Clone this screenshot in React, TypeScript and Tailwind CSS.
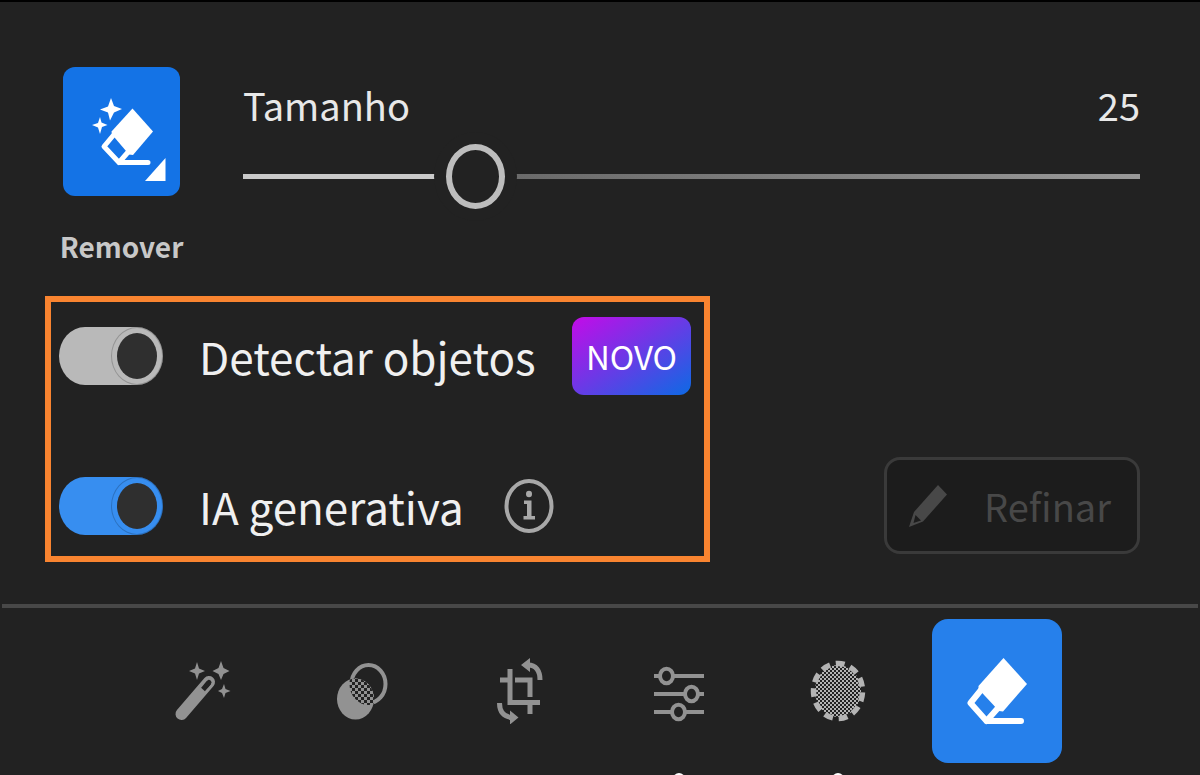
import { useState } from "react";
import type { ReactNode } from "react";

function MagicEraserIcon() {
  return (
    <svg viewBox="0 0 117 129" className="h-full w-full" aria-hidden="true">
      <path
        fill="#fff"
        d="M48 31l3 8 8 3-8 3.500-4 8-2-8-8-3 8-3zM37 50l1.500 5.500 6 2.500-5.500 2-2 7-2-6.500-6-2.500 6-2z"
      />
      <path fill="#fff" d="M69.500 41.500L90 64.500 70 88l-4-.5-17-20-.5-3z" />
      <path
        fill="none"
        stroke="#fff"
        strokeWidth="5"
        strokeLinejoin="round"
        strokeLinecap="round"
        d="M51 67.500L41 79.500 56 95.500 66 84M56 95.500H85"
      />
      <path fill="#fff" d="M102.500 91V114H82z" />
    </svg>
  );
}

function WandIcon() {
  return (
    <svg viewBox="0 0 60 66" className="h-[66px] w-[60px]" aria-hidden="true">
      <path
        fill="none"
        stroke="currentColor"
        strokeWidth="12"
        strokeLinecap="round"
        d="M9.500 56L37 24"
      />
      <path fill="none" stroke="#222" strokeWidth="5" strokeLinecap="round" d="M37 24.500L34.500 27.500" />
      <path stroke="#222" strokeWidth="5" d="M37 24.500L31 31.500" />
      <path
        fill="currentColor"
        d="M25 4l2 6.500 6 2.500-6 2.500-2 6.500-2-6.500-6-2.500 6-2.500zM49 3l2.500 7 6 3-6 3L49 22l-2.500-6-6-3 6-3zM52 26l1.500 5 5 2-5 2-1.500 5-2-5-4-2 4-2z"
      />
    </svg>
  );
}

function PresetsIcon() {
  return (
    <svg viewBox="0 0 60 66" className="h-[66px] w-[60px]" aria-hidden="true">
      <defs>
        <pattern id="presets-check" width="6" height="6" patternUnits="userSpaceOnUse">
          <rect width="6" height="6" fill="#222" />
          <path fill="currentColor" d="M0 0h3v3H0zM3 3h3v3H3z" />
        </pattern>
        <clipPath id="presets-clip">
          <ellipse cx="24.500" cy="41" rx="18.500" ry="20.500" />
        </clipPath>
      </defs>
      <ellipse cx="24.500" cy="41" rx="18.500" ry="20.500" fill="currentColor" />
      <ellipse
        cx="37.500"
        cy="26"
        rx="17"
        ry="19"
        fill="none"
        stroke="currentColor"
        strokeWidth="4"
      />
      <ellipse
        cx="37.500"
        cy="26"
        rx="19"
        ry="21"
        fill="url(#presets-check)"
        clipPath="url(#presets-clip)"
      />
    </svg>
  );
}

function CropIcon() {
  return (
    <svg viewBox="0 0 60 66" className="h-[66px] w-[60px]" aria-hidden="true">
      <path
        fill="none"
        stroke="currentColor"
        strokeWidth="5"
        d="M20 11V44.500H50M10 22H17.500M25 22H40V39M40 47V56"
      />
      <path
        fill="none"
        stroke="currentColor"
        strokeWidth="5"
        d="M38 7C46 7 50 13 50 22M9.500 45C9.500 54 14 59 22 59.500"
      />
      <path fill="currentColor" d="M31 7L40 0V14zM28.500 59.500L20 52.500V66.500z" />
    </svg>
  );
}

function SlidersIcon() {
  return (
    <svg viewBox="0 0 60 66" className="h-[66px] w-[60px]" aria-hidden="true">
      <g fill="none" stroke="currentColor" strokeWidth="4">
        <path d="M5 18h6M24 18h31M5 36h31M49 36h6M5 54h18M36 54h19" />
        <ellipse cx="17.500" cy="18" rx="6.500" ry="7.200" />
        <ellipse cx="42.500" cy="36" rx="6.500" ry="7.200" />
        <ellipse cx="29.500" cy="54" rx="6.500" ry="7.200" />
      </g>
    </svg>
  );
}

function MaskIcon() {
  return (
    <svg viewBox="0 0 60 66" className="h-[66px] w-[60px]" aria-hidden="true">
      <defs>
        <pattern id="mask-check" width="4" height="4" patternUnits="userSpaceOnUse">
          <path fill="#b4b4b4" d="M0 0h2v2H0zM2 2h2v2H2z" />
        </pattern>
      </defs>
      <ellipse cx="30" cy="33" rx="23" ry="26" fill="url(#mask-check)" />
      <ellipse
        cx="30"
        cy="33"
        rx="24.500"
        ry="27.500"
        fill="none"
        stroke="#b4b4b4"
        strokeWidth="5.500"
        pathLength="110"
        strokeDasharray="6 4"
        strokeDashoffset="-1"
      />
    </svg>
  );
}

function EraserIcon() {
  return (
    <svg viewBox="0 0 130 144" className="h-full w-full" aria-hidden="true">
      <path fill="#fff" d="M71.500 39L95 65 71 92.500l-4-.5-20.500-22V67z" />
      <path
        fill="none"
        stroke="#fff"
        strokeWidth="6"
        strokeLinejoin="round"
        strokeLinecap="round"
        d="M49 71L38.500 84 54.500 102 66 89M54.500 102H89"
      />
    </svg>
  );
}

function InfoIcon() {
  return (
    <svg viewBox="0 0 50 54" className="h-[54px] w-[50px]" aria-hidden="true">
      <ellipse cx="25" cy="27" rx="22.500" ry="25" fill="none" stroke="#a8a8a8" strokeWidth="4" />
      <ellipse cx="25" cy="15" rx="3" ry="3.300" fill="#a8a8a8" />
      <path fill="#a8a8a8" d="M20 21.500h7.500v15.500H31v3.500H19.500V37H23V25h-3z" />
    </svg>
  );
}

function PencilIcon() {
  return (
    <svg viewBox="0 0 38 42" className="h-[42px] w-[38px]" aria-hidden="true">
      <path fill="#484848" d="M29 0L38 9.500 14 36.500 0 42 5 27z" />
      <path fill="#1c1c1c" d="M6.500 30L12 35.500 4.500 38z" />
    </svg>
  );
}

interface ToggleProps {
  id: string;
  label: string;
  tone: string;
  children?: ReactNode;
}

function Toggle({ id, label, tone, children }: ToggleProps) {
  const [on, setOn] = useState(true);

  return (
    <div className="flex items-center">
      <input
        id={id}
        type="checkbox"
        role="switch"
        checked={on}
        onChange={(e) => setOn(e.target.checked)}
        className={`relative h-[58px] w-[104px] shrink-0 appearance-none rounded-[26px/29px] before:absolute before:left-0 before:h-[58px] before:w-[52px] before:rounded-[50%] before:border before:border-black/20 after:absolute after:left-[6px] after:top-[6px] after:h-[46px] after:w-[40px] after:rounded-[50%] after:bg-[#2f2f2f] checked:before:left-[52px] checked:after:left-[58px] ${tone}`}
      />
      <label
        htmlFor={id}
        className="ml-9 text-[44px] leading-[60px] whitespace-nowrap text-[#f0f0f0]"
      >
        {label}
      </label>
      {children}
    </div>
  );
}

function SizeSlider() {
  const [size, setSize] = useState(25);
  const percent = ((size - 1) / 99) * 100;

  return (
    <div className="flex-1">
      <div className="flex justify-between text-[38px] leading-[60px] text-[#e8e8e8]">
        <label htmlFor="size">Tamanho</label>
        <output htmlFor="size">{size}</output>
      </div>
      <input
        id="size"
        type="range"
        min={1}
        max={100}
        value={size}
        onChange={(e) => setSize(Number(e.target.value))}
        style={{
          backgroundImage: `linear-gradient(to right, #cacaca ${percent}%, #666 ${percent}%, #999 100%)`,
        }}
        className="mt-[39px] block h-[5px] w-full appearance-none [&::-webkit-slider-thumb]:h-[65px] [&::-webkit-slider-thumb]:w-[59px] [&::-webkit-slider-thumb]:appearance-none [&::-webkit-slider-thumb]:rounded-[50%] [&::-webkit-slider-thumb]:border-[6px] [&::-webkit-slider-thumb]:border-[#bdbdbd] [&::-webkit-slider-thumb]:bg-[#222] [&::-webkit-slider-thumb]:shadow-[0_0_0_12px_#222]"
      />
    </div>
  );
}

const tabs = [
  { name: "Automático", icon: <WandIcon />, dot: false },
  { name: "Predefinições", icon: <PresetsIcon />, dot: false },
  { name: "Cortar", icon: <CropIcon />, dot: false },
  { name: "Editar", icon: <SlidersIcon />, dot: true },
  { name: "Máscara", icon: <MaskIcon />, dot: true },
];

export default function App() {
  return (
    <div className="min-h-screen overflow-hidden border-t-2 border-black bg-[#222] font-['Noto_Sans_CJK_SC','Noto_Sans',sans-serif]">
      <main>
        <section className="flex gap-[60px] px-[60px] pt-[65px]">
          <div className="flex w-[123px] flex-col items-center">
            <button
              type="button"
              aria-label="Remover"
              className="h-[129px] w-[117px] rounded-xl bg-[#1473e6]"
            >
              <MagicEraserIcon />
            </button>
            <span className="mt-[30px] text-[28px] leading-[40px] font-bold text-[#c8c8c8]">
              Remover
            </span>
          </div>
          <div className="flex flex-1 pt-2">
            <SizeSlider />
          </div>
        </section>

        <section className="mt-[30px] flex items-end justify-between pr-[60px] pl-[45px]">
          <div className="flex h-[266px] w-[665px] flex-col justify-between border-6 border-[#f98430] pt-[15px] pr-[13px] pb-5 pl-2">
            <Toggle id="detect" label="Detectar objetos" tone="bg-[#b9b9b9]">
              <span className="ml-auto flex h-[78px] w-[119px] shrink-0 items-center justify-center rounded-xl bg-linear-to-br/srgb from-[#c40be8] to-[#0d6ae4] text-[33px] leading-[40px] text-white">
                NOVO
              </span>
            </Toggle>
            <Toggle id="generative" label="IA generativa" tone="bg-[#378ef0]">
              <button type="button" aria-label="Informações" className="ml-10">
                <InfoIcon />
              </button>
            </Toggle>
          </div>
          <button
            type="button"
            disabled
            className="mb-2 flex h-[97px] w-[256px] items-center justify-between rounded-2xl border-3 border-[#3a3a3a] bg-[#1c1c1c] pr-[26px] pl-[22px] text-[38px] leading-[60px] text-[#484848]"
          >
            <PencilIcon />
            Refinar
          </button>
        </section>
      </main>

      <nav className="mx-[2px] mt-[42px] grid grid-cols-6 border-t-4 border-[#484848] pt-[11px] pr-[122px] pl-[120px] text-[#929292]">
        {tabs.map((tab) => (
          <button
            key={tab.name}
            type="button"
            aria-label={tab.name}
            className="relative flex h-[144px] items-center justify-center"
          >
            {tab.icon}
            {tab.dot && (
              <span className="absolute top-[154px] left-1/2 h-3 w-3 -translate-x-1/2 rounded-full bg-white" />
            )}
          </button>
        ))}
        <button
          type="button"
          aria-label="Remover"
          aria-current="page"
          className="h-[144px] w-[130px] justify-self-center rounded-2xl bg-[#2680eb]"
        >
          <EraserIcon />
        </button>
      </nav>
    </div>
  );
}
